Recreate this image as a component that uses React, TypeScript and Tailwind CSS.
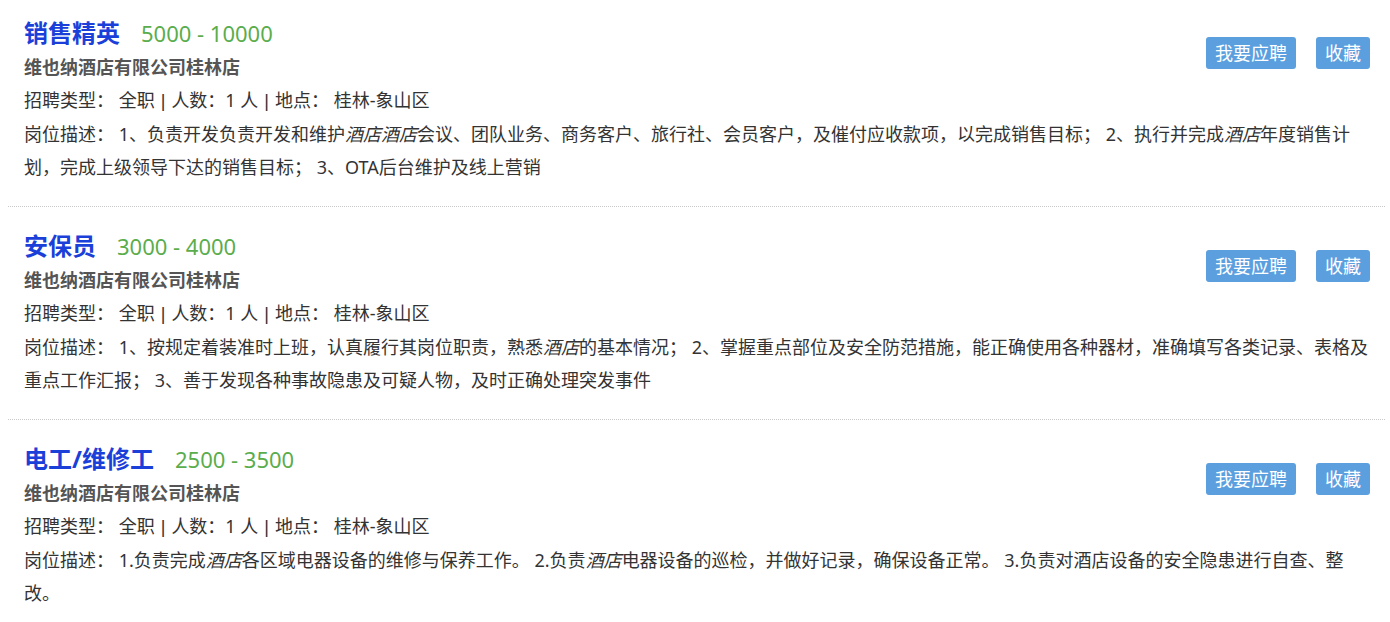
import React from "react";

type Part = { t: string; i?: boolean };
type Job = { title: string; salary: string; desc: Part[] };

const jobs: Job[] = [
  {
    title: "销售精英",
    salary: "5000 - 10000",
    desc: [
      { t: "1、负责开发负责开发和维护" },
      { t: "酒店酒店", i: true },
      { t: "会议、团队业务、商务客户、旅行社、会员客户，及催付应收款项，以完成销售目标； 2、执行并完成" },
      { t: "酒店", i: true },
      { t: "年度销售计划，完成上级领导下达的销售目标； 3、OTA后台维护及线上营销" },
    ],
  },
  {
    title: "安保员",
    salary: "3000 - 4000",
    desc: [
      { t: "1、按规定着装准时上班，认真履行其岗位职责，熟悉" },
      { t: "酒店", i: true },
      { t: "的基本情况； 2、掌握重点部位及安全防范措施，能正确使用各种器材，准确填写各类记录、表格及重点工作汇报； 3、善于发现各种事故隐患及可疑人物，及时正确处理突发事件" },
    ],
  },
  {
    title: "电工/维修工",
    salary: "2500 - 3500",
    desc: [
      { t: "1.负责完成" },
      { t: "酒店", i: true },
      { t: "各区域电器设备的维修与保养工作。 2.负责" },
      { t: "酒店", i: true },
      { t: "电器设备的巡检，并做好记录，确保设备正常。 3.负责对酒店设备的安全隐患进行自查、整改。" },
    ],
  },
];

function Pipe() {
  return <span className="font-['Liberation_Sans'] mx-[6px]">|</span>;
}

export default function App() {
  return (
    <div
      className="w-[1390px] h-[622px] overflow-hidden bg-white pl-[8px] pr-[5px]"
      style={{ fontFamily: '"Noto Sans", "Noto Sans CJK SC", sans-serif' }}
    >
      {jobs.map((job, idx) => (
        <div
          key={idx}
          className={`relative pl-[16px] pr-[15px] pb-[22px] ${idx === 0 ? "pt-[16px]" : "pt-[22px]"} ${idx < jobs.length - 1 ? "border-b border-dotted border-[#c8c8c8]" : ""}`}
        >
          <div className="absolute right-[15px] flex gap-[20px]" style={{ top: idx === 0 ? 37 : 43 }}>
            <button className="h-[32px] px-[9px] rounded-[3px] bg-[#5b9fdf] text-white text-[18px] leading-[32px]">
              我要应聘
            </button>
            <button className="h-[32px] px-[9px] rounded-[3px] bg-[#5b9fdf] text-white text-[18px] leading-[32px]">
              收藏
            </button>
          </div>
          <div className="flex items-center h-[34px]">
            <span className="text-[24px] font-bold text-[#1b3fd9] leading-[34px]">{job.title}</span>
            <span className="ml-[21px] text-[22px] text-[#5aad4c] leading-[34px]">{job.salary}</span>
          </div>
          <div className="text-[18px] font-bold text-[#555] leading-[34px]">维也纳酒店有限公司桂林店</div>
          <div className="text-[18px] text-[#333] leading-[33px]">
            招聘类型： 全职<Pipe />人数：1 人<Pipe />地点： 桂林-象山区
          </div>
          <div className="text-[18px] text-[#333] leading-[33px]">
            岗位描述：{" "}
            {job.desc.map((p, i) =>
              p.i ? (
                <i key={i} className="italic">
                  {p.t}
                </i>
              ) : (
                <span key={i}>{p.t}</span>
              )
            )}
          </div>
        </div>
      ))}
    </div>
  );
}
